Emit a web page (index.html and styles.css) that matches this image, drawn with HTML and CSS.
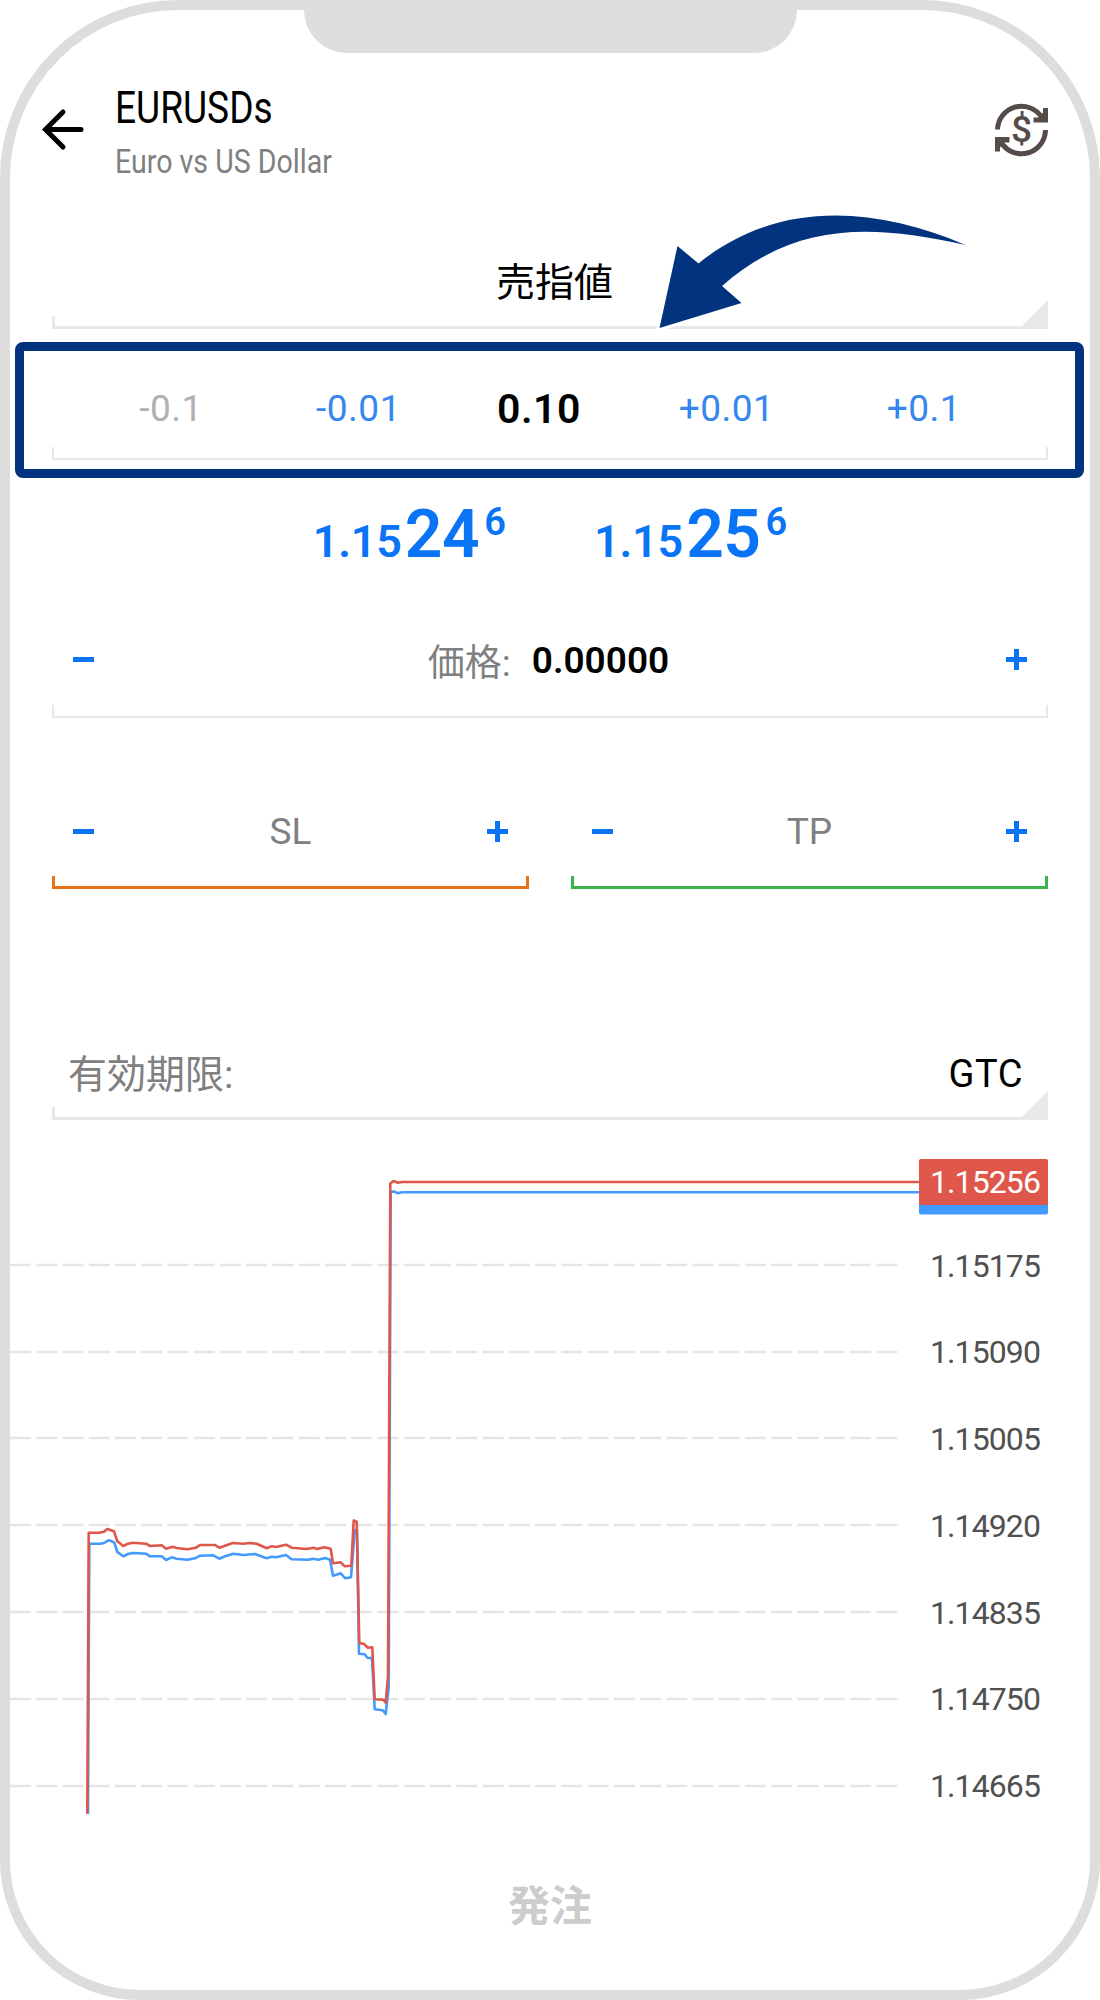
FILE: index.html
```
<!DOCTYPE html>
<html lang="ja">
<head>
  <meta charset="UTF-8" />
  <meta name="viewport" content="width=device-width, initial-scale=1.0"/>
  <title>EURUSDs</title>
  <link rel="stylesheet" href="styles.css">
</head>
<body>

  <div class="phone">
    <div class="notch"></div>

    <header>
      <svg class="back" width="44" height="44" viewBox="0 0 44 44">
        <path d="M22 5 L4.5 22.5 L22 40 M5 22.5 H40" />
      </svg>
      <div class="symbol">
        <h1>EURUSDs</h1>
        <p>Euro vs US Dollar</p>
      </div>
      <svg class="currency" width="53" height="54" viewBox="0 0 53 54">
        <path class="ring" d="M2.5 26.5 A24 24 0 0 1 46.5 14 M50.5 27 A24 24 0 0 1 6.5 40" />
        <path d="M53 5 V19.5 H38.5 V14.5 H43.5 L48 9.5 V5 Z M0 48.5 V34 H14.5 V39.5 H9.5 L5 44.5 V48.5 Z" />
        <text x="26.5" y="39">$</text>
      </svg>
    </header>

    <div class="field select order-type">売指値</div>

    <div class="highlight">
      <div class="field volume">
        <span class="off">-0.1</span>
        <span>-0.01</span>
        <b>0.10</b>
        <span>+0.01</span>
        <span>+0.1</span>
      </div>
    </div>

    <div class="quotes">
      <div class="quote"><span>1.15</span><strong>24</strong><sup>6</sup></div>
      <div class="quote"><span>1.15</span><strong>25</strong><sup>6</sup></div>
    </div>

    <div class="field stepper price">
      <i class="minus"></i>
      <div class="value"><span>価格:</span><b>0.00000</b></div>
      <i class="plus"></i>
    </div>

    <div class="stops">
      <div class="field stepper sl">
        <i class="minus"></i>
        <span>SL</span>
        <i class="plus"></i>
      </div>
      <div class="field stepper tp">
        <i class="minus"></i>
        <span>TP</span>
        <i class="plus"></i>
      </div>
    </div>

    <div class="field select expiry">
      <span>有効期限:</span>
      <span class="gtc">GTC</span>
    </div>

    <div class="chart">
      <svg width="909" height="670" viewBox="10 1159 909 670">
        <path class="grid" d="M10 1265H898M10 1352H898M10 1438H898M10 1525H898M10 1612H898M10 1699H898M10 1786H898" />
        <path class="bid" d="M88 1813.7 L89.3 1543.7 H100 L104 1543 L108.3 1540.3 L111 1541 L114.3 1542.7 L117.3 1552 L123.3 1556.3 L128 1554 L132.7 1553 L139 1553.2 L146 1553.7 L150 1556.3 L161.7 1556.3 L166 1560 L171.7 1557.3 L176.7 1558.7 L187.3 1559.7 L195 1558.3 L200 1555.7 L213.3 1555.3 L219.3 1558.7 L225 1556.3 L233.3 1553.7 L243.3 1555 L255 1554 L266.7 1558.3 L271.7 1556.7 L276 1557.3 L286 1555 L291.7 1559.3 L308.3 1559.7 L313.3 1558.7 L318.3 1559.7 L325 1558 L330 1559.7 L333 1575.7 L340.7 1573.3 L345.3 1578.3 L351 1577.3 L354.7 1530 L357 1530 L359 1653.7 L364.7 1654.3 L367.7 1658 L372 1658 L374.7 1709.3 L382.7 1710.3 L385.7 1714 L388.7 1687 L390.7 1191.7 L394 1191.5 L398 1193.3 L402 1192.3 H919" />
        <path class="ask" d="M87.3 1813.7 L88.7 1532.8 H99.3 L104 1531.7 L107.3 1529 L114 1531.3 L117.3 1541.3 L123.3 1546 L128 1543.7 L132.7 1542.7 L146 1543.7 L150 1546 L161.7 1545.3 L166 1548.7 L172.7 1546.7 L176.7 1548 L187.3 1549.3 L196 1547.7 L200 1545 L215 1545 L219.3 1547.7 L225 1545.7 L232.7 1543 L243.3 1543.7 L249.3 1543 L256.7 1543.7 L266.7 1548.3 L271.7 1546.3 L276 1547 L286 1544.7 L291.7 1547.7 L306.7 1549 L313.3 1547.7 L317.3 1549 L324 1547.3 L330.7 1548.7 L333 1563.3 L340.7 1562.3 L344.7 1566.3 L351.3 1565.7 L353.7 1520.5 L356.7 1521.7 L359.3 1643 L364 1644 L368 1647.7 L372.3 1647.3 L374.7 1699.3 L383.3 1699.7 L385.7 1702.7 L388 1676.7 L390.3 1183.5 L393.5 1181 L398 1182.7 L402 1182 H919" />
      </svg>
      <div class="axis">
        <div class="badge">1.15256</div>
        <p>1.15175</p>
        <p>1.15090</p>
        <p>1.15005</p>
        <p>1.14920</p>
        <p>1.14835</p>
        <p>1.14750</p>
        <p>1.14665</p>
      </div>
    </div>

    <div class="submit">発注</div>

    <!-- arrow pointing at the volume row -->
    <svg class="pointer" width="320" height="130" viewBox="650 205 320 130">
      <path d="M659.5 328 L677.5 246 L698.5 263.5 C775 201 872 205 965.5 245 C864 222 792 225 722 286 L741.5 303 Z" />
    </svg>
  </div>

</body>
</html>
```
FILE: styles.css
```
*,
*::before,
*::after {
  box-sizing: border-box;
}

body {
  margin: 0;
  background: #fff;
  font-family: Roboto, "Noto Sans CJK JP", sans-serif;
}

.phone {
  position: relative;
  width: 1100px;
  height: 2000px;
  border: 10px solid #ddd;
  border-radius: 178px 178px 140px 140px;
  background: #fff;
}

.notch {
  width: 493px;
  height: 43px;
  margin: 0 auto;
  background: #ddd;
  border-radius: 0 0 45px 45px;
}

/* header */
header {
  display: flex;
  height: 187px;
  padding: 27px 42px 0 31px;
}

.back {
  margin-top: 27px;
  fill: none;
  stroke: #000;
  stroke-width: 5;
  stroke-linecap: round;
}

.symbol {
  flex: 1;
  padding: 1px 0 0 30px;
}

.symbol h1 {
  margin: 0;
  font-size: 45px;
  font-weight: 400;
  line-height: 54px;
  transform: scaleX(0.825);
  transform-origin: left;
}

.symbol p {
  margin: 0;
  color: #808080;
  font-size: 34px;
  line-height: 52px;
  transform: scaleX(0.84);
  transform-origin: left;
}

.currency {
  margin-top: 23px;
  fill: #554b48;
}

.currency .ring {
  fill: none;
  stroke: #554b48;
  stroke-width: 5;
}

.currency text {
  font-size: 37px;
  font-weight: 500;
  text-anchor: middle;
}

/* input rows with the bracket underline */
.field {
  position: relative;
  display: flex;
  align-items: center;
  margin: 0 42px;
  color: #808080;
  font-size: 37px;
}

.field::after {
  content: "";
  position: absolute;
  left: 0;
  right: 0;
  bottom: 0;
  height: 13px;
  border: 2px solid #e8e8e8;
  border-top: none;
}

.select::after {
  border-width: 0 3px 3px;
}

.select::before {
  content: "";
  position: absolute;
  right: 0;
  bottom: 0;
  width: 29px;
  height: 29px;
  background: #e8e8e8;
  clip-path: polygon(100% 0, 100% 100%, 0 100%);
}

.order-type {
  height: 89px;
  justify-content: center;
  padding: 0 0 11px 9px;
  color: #000;
  font-size: 39px;
}

.highlight {
  height: 136px;
  margin: 13px 6px 0 5px;
  border: 9px solid #02337f;
  border-radius: 8px;
}

.volume {
  display: grid;
  grid-template-columns: 221px 171px 190px 185px 210px;
  height: 109px;
  margin: 0 27px 0 28px;
  padding-top: 5px;
  color: #3586ee;
  letter-spacing: 0.5px;
  text-align: center;
}

.volume .off {
  padding-left: 17px;
  color: #b0b0b0;
}

.volume b {
  padding-top: 1px;
  color: #000;
  font-size: 41px;
  font-weight: 600;
}

.quotes {
  display: flex;
  justify-content: center;
  gap: 88px;
  height: 112px;
  padding-top: 18px;
  color: #0a74f7;
  font-weight: 600;
}

.quote {
  display: flex;
  align-items: baseline;
  line-height: 78px;
}

.quote span {
  font-size: 45px;
  letter-spacing: -0.2px;
}

.quote strong {
  margin-left: 3px;
  font-size: 66px;
  font-weight: 600;
  letter-spacing: -0.5px;
}

.quote sup {
  position: relative;
  top: -22px;
  margin-left: 5px;
  font-size: 38px;
  line-height: 1;
  vertical-align: baseline;
}

.stepper {
  justify-content: space-between;
  padding: 0 21px;
}

.minus,
.plus {
  width: 21px;
  height: 21px;
  background: linear-gradient(#0a74f7, #0a74f7) center / 21px 5px no-repeat;
}

.plus {
  background:
    linear-gradient(#0a74f7, #0a74f7) center / 21px 5px no-repeat,
    linear-gradient(#0a74f7, #0a74f7) center / 5px 21px no-repeat;
}

.price {
  height: 128px;
  padding-top: 11px;
}

.value {
  display: flex;
  align-items: center;
  padding-right: 3px;
}

.value span {
  margin-right: 21px;
}

.value b {
  padding-top: 2px;
  color: #000;
  font-size: 37px;
  font-weight: 600;
}

.stops {
  display: flex;
  gap: 42px;
  margin: 0 42px;
}

.stops .field {
  flex: 1;
  height: 171px;
  margin: 0;
  padding-top: 55px;
}

.sl::after {
  border-color: #ea7114;
  border-width: 0 3px 3px;
}

.tp::after {
  border-color: #38b44a;
  border-width: 0 3px 3px;
}

.expiry {
  height: 231px;
  justify-content: space-between;
  padding: 132px 25px 0 16px;
  font-size: 39px;
}

.gtc {
  padding-top: 6px;
  color: #000;
  font-size: 38px;
  letter-spacing: 0.6px;
}

/* tick chart */
.chart {
  display: flex;
  height: 709px;
  padding-top: 39px;
}

.chart path {
  fill: none;
  stroke-width: 2.6;
  stroke-linejoin: round;
}

.chart .grid {
  stroke: #e5e5e5;
  stroke-width: 2.4;
  stroke-dasharray: 21 5.25;
}

.chart .bid {
  stroke: #419bff;
}

.chart .ask {
  stroke: #df574a;
}

.axis {
  width: 129px;
  padding-left: 3px;
  color: #505050;
  font-size: 32px;
  letter-spacing: -0.9px;
  text-align: center;
}

.axis p {
  margin: 0;
  line-height: 86.8px;
}

.badge {
  height: 46px;
  margin: 0 0 17.5px -3px;
  padding-left: 3px;
  background: #df574a;
  border-radius: 2px;
  box-shadow: 0 9.5px #419bff;
  color: #fff;
  line-height: 47px;
}

.submit {
  padding-top: 48px;
  color: #ccc;
  font-size: 42px;
  font-weight: 700;
  line-height: 60px;
  text-align: center;
}

.pointer {
  position: absolute;
  left: 640px;
  top: 195px;
  fill: #02337f;
  stroke: #fff;
  stroke-width: 6;
  paint-order: stroke;
}
```
